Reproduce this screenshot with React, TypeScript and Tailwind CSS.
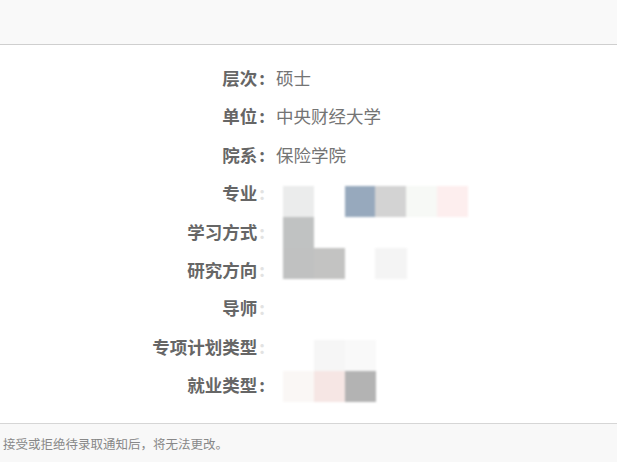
import React from "react";

interface Row {
  label: string;
  value: string;
  faintColon?: boolean;
}

const rows: Row[] = [
  { label: "层次", value: "硕士" },
  { label: "单位", value: "中央财经大学" },
  { label: "院系", value: "保险学院" },
  { label: "专业", value: "", faintColon: true },
  { label: "学习方式", value: "", faintColon: true },
  { label: "研究方向", value: "", faintColon: true },
  { label: "导师", value: "", faintColon: true },
  { label: "专项计划类型", value: "", faintColon: true },
  { label: "就业类型", value: "" },
];

// 打码块：[行, 列, 颜色]
const mosaic: [number, number, string][] = [
  [0, 0, "#ebecec"],
  [0, 2, "#97a9bd"],
  [0, 3, "#d3d3d3"],
  [0, 4, "#f7f9f6"],
  [0, 5, "#fdeeee"],
  [1, 0, "#c0c2c2"],
  [2, 0, "#c0c1c1"],
  [2, 1, "#c3c3c2"],
  [2, 3, "#f4f4f4"],
  [5, 1, "#f6f6f6"],
  [5, 2, "#f9f9f9"],
  [6, 0, "#faf7f5"],
  [6, 1, "#f6e6e4"],
  [6, 2, "#b3b3b3"],
];

const CELL = 30.8;

const App: React.FC = () => {
  return (
    <div
      className="flex h-[462px] w-full flex-col overflow-hidden bg-white"
      style={{ fontFamily: '"Noto Sans CJK SC", "Noto Sans", sans-serif' }}
    >
      {/* 顶部栏 */}
      <div className="h-[45px] shrink-0 border-b border-[#cfcfcf] bg-[#f9f9f9]" />

      {/* 信息列表 */}
      <div className="relative flex-1 pt-[14px]">
        {rows.map((row) => (
          <div key={row.label} className="flex h-[38.4px] items-center">
            <div className="w-[265px] text-right text-[17.5px] font-bold text-[#666]">
              {row.label}
              <span className={row.faintColon ? "ml-[2px] text-[#e2e2e2]" : "ml-[2px]"}>:</span>
            </div>
            <div className="ml-[11px] text-[17.5px] text-[#747474]">{row.value}</div>
          </div>
        ))}

        {/* 马赛克遮挡 */}
        <div className="pointer-events-none absolute left-[283px] top-[141px] blur-[1px]">
          {mosaic.map(([r, c, color]) => (
            <div
              key={`${r}-${c}`}
              className="absolute"
              style={{
                left: c * CELL,
                top: r * CELL,
                width: CELL + 0.5,
                height: CELL + 0.5,
                backgroundColor: color,
              }}
            />
          ))}
        </div>
      </div>

      {/* 底部提示 */}
      <div className="flex h-[39px] shrink-0 items-center border-t border-[#d6d6d6] bg-[#f8f8f8] pl-[3px] pt-[3px]">
        <span className="text-[12.5px] text-[#888]">接受或拒绝待录取通知后，将无法更改。</span>
      </div>
    </div>
  );
};

export default App;
